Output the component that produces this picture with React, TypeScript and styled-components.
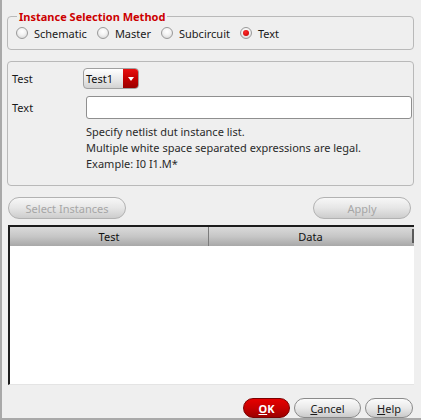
import React from "react";
import styled, { createGlobalStyle } from "styled-components";

const Global = createGlobalStyle`
  html, body { margin: 0; padding: 0; background: #efefef; }
  * { box-sizing: border-box; }
  body { font-family: "Noto Sans", "DejaVu Sans", sans-serif; font-size: 11px; color: #1a1a1a; }
`;

const Window = styled.div`
  width: 421px;
  height: 420px;
  background: #efefef;
  border-left: 2px solid #a9a9a9;
  border-bottom: 2px solid #a9a9a9;
  padding: 0 7px 0 5px;
  display: flex;
  flex-direction: column;
  overflow: hidden;
`;

const MethodFrame = styled.div`
  position: relative;
  margin-top: 16px;
  height: 34px;
  border: 1px solid #b9b9b9;
  border-radius: 4px;
  display: flex;
  align-items: center;
  padding-left: 8px;
`;

const FrameTitle = styled.span`
  position: absolute;
  top: -8px;
  left: 9px;
  padding: 0 2px;
  background: #efefef;
  color: #cc0000;
  font-weight: bold;
  font-size: 11px;
  line-height: 15px;
`;

const RadioItem = styled.label`
  display: flex;
  align-items: center;
  gap: 6px;
  margin-right: 10px;
  font-size: 11px;
  color: #1a1a1a;
`;

const RadioCircle = styled.span<{ $on?: boolean }>`
  width: 12px;
  height: 12px;
  border-radius: 50%;
  border: 1px solid #9a9a9a;
  background: radial-gradient(circle at 50% 35%, #ffffff 0%, #f2f2f2 45%, #cfcfcf 100%);
  display: flex;
  align-items: center;
  justify-content: center;
  &::after {
    content: "";
    display: ${(p) => (p.$on ? "block" : "none")};
    width: 6px;
    height: 6px;
    border-radius: 50%;
    background: radial-gradient(circle at 40% 35%, #ff2a2a, #c00000);
  }
`;

const FormFrame = styled.div`
  margin-top: 11px;
  height: 125px;
  border: 1px solid #b9b9b9;
  border-radius: 4px;
  padding: 6px 1px 0 4px;
  display: grid;
  grid-template-columns: 71px 1fr;
  grid-template-rows: 21px 23px auto;
  row-gap: 7px;
  align-items: center;
`;

const Label = styled.span`
  font-size: 11px;
  color: #1a1a1a;
`;

const Combo = styled.div`
  width: 56px;
  height: 21px;
  display: flex;
  border: 1px solid #a0a0a0;
  border-radius: 4px;
  overflow: hidden;
  background: linear-gradient(#ffffff, #e6e6e6 60%, #d2d2d2);
`;

const ComboText = styled.span`
  flex: 1;
  padding-left: 2px;
  line-height: 19px;
  font-size: 11px;
  color: #111;
`;

const ComboArrow = styled.span`
  width: 15px;
  background: linear-gradient(#e81010, #c00000 55%, #9a0000);
  display: flex;
  align-items: center;
  justify-content: center;
  &::after {
    content: "";
    border-left: 3px solid transparent;
    border-right: 3px solid transparent;
    border-top: 4px solid #ffffff;
  }
`;

const TextInput = styled.div`
  margin-left: 3px;
  height: 23px;
  background: #ffffff;
  border: 1px solid #8f8f8f;
  border-radius: 3px;
`;

const Help = styled.div`
  grid-column: 2;
  align-self: start;
  margin-left: 3px;
  margin-top: -2px;
  font-size: 11px;
  line-height: 16px;
  color: #2a2a2a;
`;

const ActionRow = styled.div`
  margin-top: 11px;
  height: 22px;
  display: flex;
  justify-content: space-between;
  padding: 0 3px 0 1px;
`;

const PillButton = styled.div<{ $w: number; $disabled?: boolean }>`
  width: ${(p) => p.$w}px;
  height: 22px;
  border-radius: 11px;
  border: 1px solid ${(p) => (p.$disabled ? "#b2b2b2" : "#8a8a8a")};
  background: linear-gradient(#f7f7f7, #e6e6e6 50%, #cdcdcd);
  color: ${(p) => (p.$disabled ? "#a6a6a6" : "#1a1a1a")};
  font-size: 11px;
  display: flex;
  align-items: center;
  justify-content: center;
`;

const Table = styled.div`
  margin-top: 6px;
  margin-left: 1px;
  height: 160px;
  display: flex;
  flex-direction: column;
  border-top: 2px solid #1c1c1c;
  border-left: 2px solid #1c1c1c;
  border-bottom: 1px solid #e4e4e4;
  background: #ffffff;
`;

const HeaderRow = styled.div`
  height: 19px;
  display: grid;
  grid-template-columns: 199px 1fr 2px;
  background: linear-gradient(#dadada, #c6c6c6 50%, #a8a8a8);
`;

const HeaderCell = styled.div<{ $divider?: boolean }>`
  display: flex;
  align-items: center;
  justify-content: center;
  font-size: 11px;
  color: #111;
  border-right: ${(p) => (p.$divider ? "1px solid #7c7c7c" : "none")};
`;

const HeaderEnd = styled.div`
  background: #5a5a5a;
  margin: 2px 0 3px;
`;

const TableBody = styled.div`
  flex: 1;
  background: #ffffff;
  margin-right: 1px;
`;

const DialogRow = styled.div`
  margin-top: 13px;
  height: 20px;
  display: flex;
  justify-content: flex-end;
  gap: 4px;
  padding-right: 1px;
`;

const DialogButton = styled.div<{ $w: number; $primary?: boolean }>`
  width: ${(p) => p.$w}px;
  height: 20px;
  border-radius: 10px;
  border: 1px solid ${(p) => (p.$primary ? "#7a0000" : "#8a8a8a")};
  background: ${(p) =>
    p.$primary
      ? "linear-gradient(#e60000, #c80000 50%, #9c0000)"
      : "linear-gradient(#fbfbfb, #e9e9e9 50%, #cacaca)"};
  color: ${(p) => (p.$primary ? "#ffffff" : "#1a1a1a")};
  font-weight: ${(p) => (p.$primary ? "bold" : "normal")};
  font-size: 11px;
  display: flex;
  align-items: center;
  justify-content: center;
`;

const radios = [
  { label: "Schematic", on: false },
  { label: "Master", on: false },
  { label: "Subcircuit", on: false },
  { label: "Text", on: true },
];

export default function App() {
  return (
    <>
      <Global />
      <Window>
        <MethodFrame>
          <FrameTitle>Instance Selection Method</FrameTitle>
          {radios.map((r) => (
            <RadioItem key={r.label}>
              <RadioCircle $on={r.on} />
              {r.label}
            </RadioItem>
          ))}
        </MethodFrame>

        <FormFrame>
          <Label>Test</Label>
          <Combo>
            <ComboText>Test1</ComboText>
            <ComboArrow />
          </Combo>
          <Label>Text</Label>
          <TextInput />
          <Help>
            Specify netlist dut instance list.
            <br />
            Multiple white space separated expressions are legal.
            <br />
            Example: I0 I1.M*
          </Help>
        </FormFrame>

        <ActionRow>
          <PillButton $w={118} $disabled>
            Select Instances
          </PillButton>
          <PillButton $w={98} $disabled>
            Apply
          </PillButton>
        </ActionRow>

        <Table>
          <HeaderRow>
            <HeaderCell $divider>Test</HeaderCell>
            <HeaderCell>Data</HeaderCell>
            <HeaderEnd />
          </HeaderRow>
          <TableBody />
        </Table>

        <DialogRow>
          <DialogButton $w={47} $primary>
            <u>O</u>K
          </DialogButton>
          <DialogButton $w={67}>
            <u>C</u>ancel
          </DialogButton>
          <DialogButton $w={48}>
            <u>H</u>elp
          </DialogButton>
        </DialogRow>
      </Window>
    </>
  );
}
